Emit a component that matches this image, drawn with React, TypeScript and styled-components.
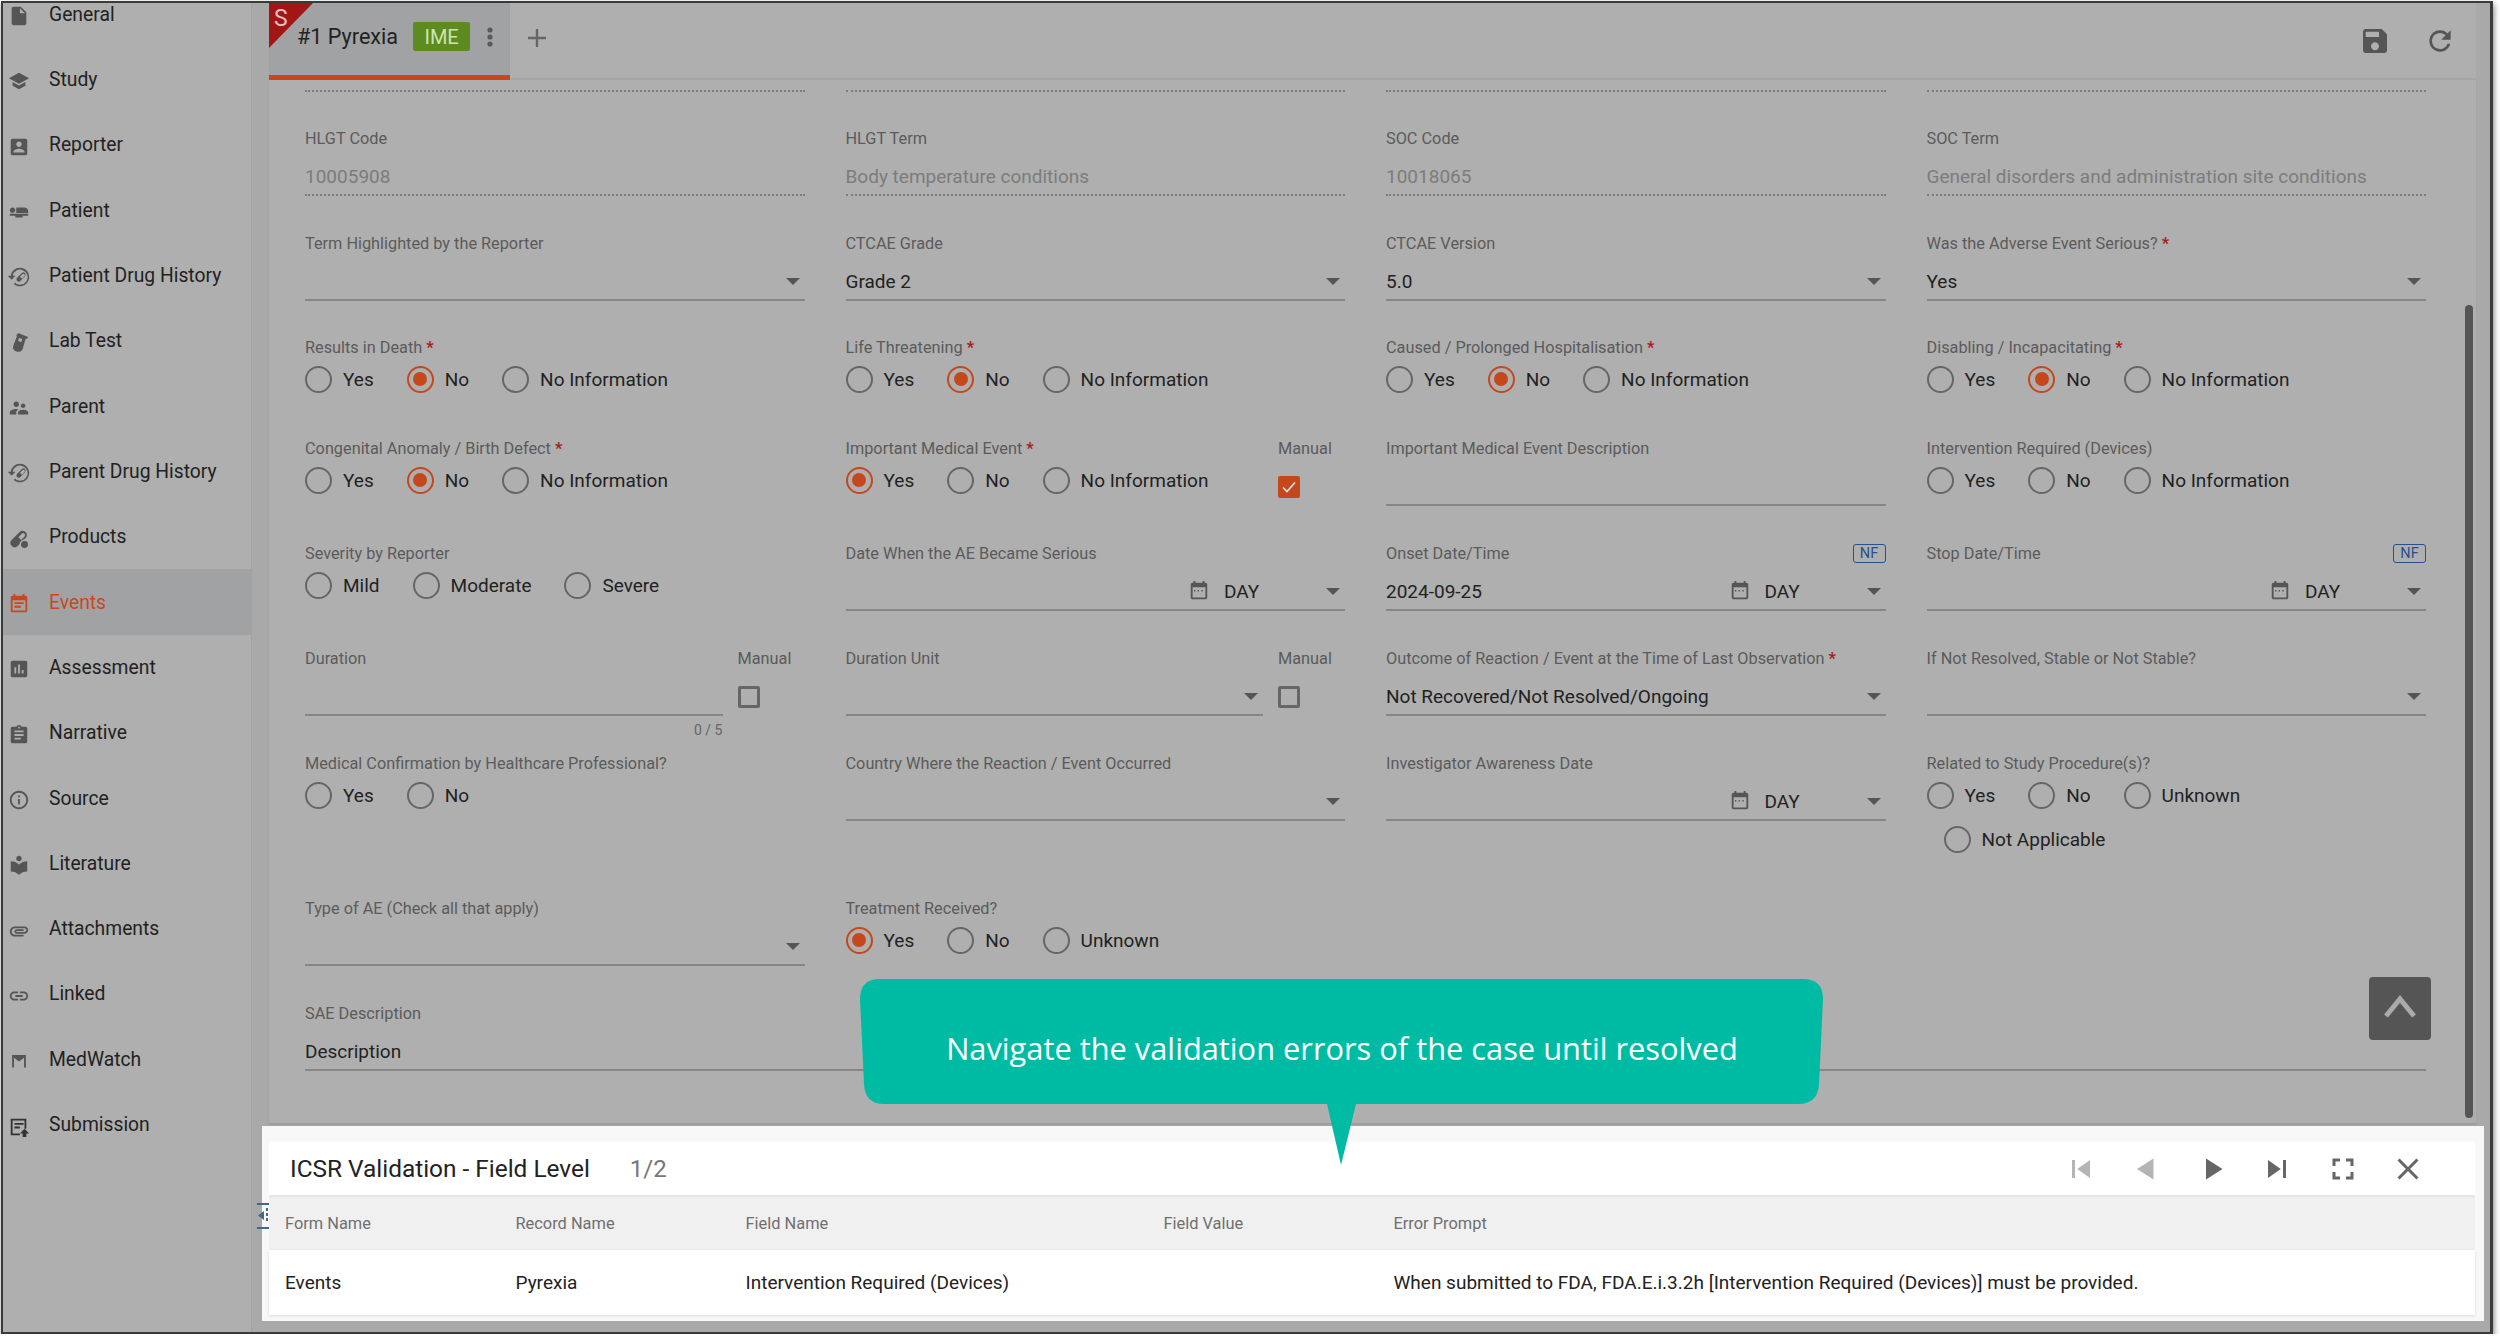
import { ReactNode } from 'react'
import styled, { createGlobalStyle } from 'styled-components'

const Global = createGlobalStyle`
  html, body {
    margin: 0;
    background: #fff;
    font-family: Roboto, "Liberation Sans", sans-serif;
  }
  * { box-sizing: border-box; }
`

const Frame = styled.div`
  width: 2492px;
  height: 1333px;
  margin: 1px 0 0 1px;
  border: 2px solid #3a3a3a;
  border-right-width: 3px;
  box-shadow: 1px 3px 6px rgba(0, 0, 0, 0.5);
  display: flex;
  position: relative;
  overflow: hidden;
  background: #a9a9a9;
`

const Sidebar = styled.nav`
  width: 249px;
  flex: none;
  background: #afafaf;
  border-right: 1px solid #a2a2a2;
  overflow: hidden;
`

const NavList = styled.div`
  margin-top: -21.6px;
`

const NavItem = styled.div<{ $active?: boolean }>`
  height: 65.33px;
  display: flex;
  align-items: center;
  padding-left: 5px;
  gap: 19px;
  font-size: 19.3px;
  color: ${p => (p.$active ? '#c8481e' : '#222')};
  background: ${p => (p.$active ? '#a0a2a4' : 'transparent')};
`

const NavIcon = styled.svg`
  width: 22px;
  height: 22px;
  flex: none;
  margin-top: 4px;
  fill: currentColor;
  fill-rule: evenodd;
`

const NavGlyph = styled.span<{ $tone: string }>`
  display: flex;
  color: ${p => p.$tone};
`

const Workspace = styled.div`
  flex: 1;
  min-width: 0;
  padding: 0 14px 0 17px;
  display: flex;
  flex-direction: column;
  position: relative;
`

const TabBar = styled.div`
  height: 77px;
  flex: none;
  background: #afafaf;
  border-bottom: 2px solid #a5a5a5;
  display: flex;
  align-items: stretch;
  position: relative;
`

const Tab = styled.div`
  width: 241px;
  margin-bottom: -2px;
  background: #a0a2a4;
  border-bottom: 5px solid #c4481c;
  position: relative;
  display: flex;
  align-items: center;
  padding: 0 0 5px 28px;
`

const Ribbon = styled.div`
  position: absolute;
  top: 0;
  left: 0;
  width: 44px;
  height: 45px;
  background: #a31616;
  clip-path: polygon(0 0, 100% 0, 0 100%);
  color: #e6c0c0;
  font-size: 23px;
  line-height: 24px;
  padding-left: 5px;
  padding-top: 4px;
`

const TabTitle = styled.span`
  font-size: 21.6px;
  color: #222;
`

const ImeBadge = styled.span`
  width: 57px;
  height: 29px;
  margin-left: 15px;
  border-radius: 2px;
  background: #5d8b1f;
  color: #cfe3b4;
  font-size: 20px;
  display: flex;
  align-items: center;
  justify-content: center;
`

const TabDots = styled.svg`
  width: 8px;
  height: 20px;
  margin-left: 16px;
  fill: #5a5a5a;
`

const AddTab = styled.svg`
  width: 20px;
  height: 20px;
  margin: 0 0 5px 17px;
  align-self: center;
  stroke: #666;
  stroke-width: 2.4;
`

const TabTools = styled.div`
  margin-left: auto;
  padding-right: 20px;
  display: flex;
  align-items: center;
  gap: 33px;
  color: #555;
`

const ToolIcon = styled.svg`
  width: 32px;
  height: 32px;
  fill: currentColor;
`

const FormArea = styled.div`
  height: 1043px;
  flex: none;
  background: #afafaf;
  box-shadow: 0 2px 2px rgba(0, 0, 0, 0.08);
  position: relative;
  overflow: hidden;
`

const FormGrid = styled.div`
  display: grid;
  grid-template-columns: repeat(4, 1fr);
  grid-template-rows: 48px 105px 104px 101px 105px 105px 105px 145px 105px;
  column-gap: 41px;
  padding: 0 50px 0 36px;
`

const DottedStub = styled.div`
  height: 12px;
  border-bottom: 2px dotted #7d7d7d;
`

const Field = styled.div`
  min-width: 0;
  display: flex;
  flex-direction: column;
`

const GrowField = styled(Field)`
  flex: 1;
`

const SplitField = styled.div`
  min-width: 0;
  display: flex;
  gap: 15px;
`

const WideField = styled(Field)`
  grid-column: 1 / -1;
`

const LabelRow = styled.div`
  height: 20px;
  display: flex;
  justify-content: space-between;
  align-items: center;
  font-size: 16.3px;
  color: #5b5b5b;
  white-space: nowrap;
`

const Star = styled.b`
  color: #a81c1c;
  margin-left: 4px;
`

const NfBadge = styled.span`
  width: 33px;
  height: 19px;
  border: 1.5px solid #29508c;
  border-radius: 3px;
  color: #29508c;
  font-size: 14.5px;
  display: flex;
  align-items: center;
  justify-content: center;
`

const Control = styled.div<{ $readonly?: boolean }>`
  height: 38px;
  margin-top: 10px;
  display: flex;
  align-items: center;
  font-size: 19px;
  color: ${p => (p.$readonly ? '#7c7c7c' : '#222')};
  border-bottom: ${p => (p.$readonly ? '2px dotted #7d7d7d' : '2px solid #868686')};
  white-space: nowrap;
`

const ControlValue = styled.span`
  flex: 1;
`

const Caret = styled.i`
  width: 0;
  height: 0;
  margin-right: 5px;
  border-left: 7px solid transparent;
  border-right: 7px solid transparent;
  border-top: 7px solid #555;
`

const CalendarIcon = styled.svg`
  width: 22px;
  height: 22px;
  margin-right: 14px;
  fill: #555;
`

const DayBox = styled.span`
  width: 102px;
`

const Counter = styled.div`
  margin-top: 6px;
  text-align: right;
  font-size: 14px;
  color: #666;
`

const RadioRow = styled.div<{ $indent?: boolean }>`
  height: 34px;
  margin-top: ${p => (p.$indent ? '10px' : '5px')};
  margin-left: ${p => (p.$indent ? '17px' : '0')};
  display: flex;
  align-items: center;
  gap: 33px;
`

const RadioItem = styled.label`
  display: flex;
  align-items: center;
  gap: 11px;
  font-size: 19px;
  color: #222;
  white-space: nowrap;
`

const RadioDot = styled.span<{ $on?: boolean }>`
  width: 27px;
  height: 27px;
  border-radius: 50%;
  border: 2.5px solid ${p => (p.$on ? '#c4481c' : '#666')};
  display: flex;
  align-items: center;
  justify-content: center;
  &::after {
    content: '';
    width: 14px;
    height: 14px;
    border-radius: 50%;
    background: ${p => (p.$on ? '#c4481c' : 'transparent')};
  }
`

const ManualColumn = styled.div`
  width: 67px;
  flex: none;
`

const Check = styled.span<{ $on?: boolean }>`
  display: flex;
  align-items: center;
  justify-content: center;
  width: 22px;
  height: 22px;
  margin-top: 18px;
  border-radius: 2px;
  background: ${p => (p.$on ? '#c4481c' : 'transparent')};
  border: ${p => (p.$on ? 'none' : '3px solid #666')};
`

const CheckMark = styled.svg`
  width: 16px;
  height: 16px;
  fill: none;
  stroke: #e4e4e4;
  stroke-width: 1.6;
`

const ScrollThumb = styled.div`
  position: absolute;
  top: 225px;
  right: 3px;
  width: 8px;
  height: 813px;
  border-radius: 4px;
  background: #555;
`

const TopButton = styled.div`
  position: absolute;
  left: 2100px;
  top: 897px;
  width: 62px;
  height: 63px;
  border-radius: 4px;
  background: #555;
  display: flex;
  align-items: center;
  justify-content: center;
`

const TopChevron = styled.svg`
  width: 36px;
  height: 30px;
  margin-bottom: 6px;
  fill: none;
  stroke: #aaa;
  stroke-width: 5;
`

const Panel = styled.section`
  margin: 3px -8px 0 -7px;
  padding: 16px 9px 6px 7px;
  background: #f8f8f8;
  flex: none;
`

const PanelHead = styled.header`
  height: 55px;
  padding: 0 21px;
  background: #fff;
  border-bottom: 2px solid #e6e6e6;
  display: flex;
  align-items: center;
`

const PanelTitle = styled.h2`
  margin: 0;
  font-weight: 400;
  font-size: 24.4px;
  color: #222;
`

const PanelCount = styled.span`
  margin-left: 40px;
  font-size: 24px;
  color: #777;
`

const PanelTools = styled.div`
  margin-left: auto;
  margin-right: 13px;
  display: flex;
  align-items: center;
`

const ToolSlot = styled.span`
  width: 65.5px;
  display: flex;
  justify-content: center;
`

const PanelIcon = styled.svg<{ $dim?: boolean }>`
  width: 36px;
  height: 36px;
  fill: ${p => (p.$dim ? '#b4b4b4' : '#666')};
`

const TableRow = styled.div<{ $head?: boolean }>`
  display: grid;
  grid-template-columns: 230.5px 230px 418px 230px 1fr;
  align-items: center;
  padding-left: 16px;
  height: ${p => (p.$head ? '53px' : '65px')};
  background: ${p => (p.$head ? '#f0f0f0' : '#fff')};
  font-size: ${p => (p.$head ? '16.4px' : '19px')};
  color: ${p => (p.$head ? '#6f6f6f' : '#222')};
  box-shadow: ${p => (p.$head ? 'none' : '0 1px 3px rgba(0, 0, 0, 0.12)')};
`

const Expander = styled.svg`
  position: absolute;
  left: 254px;
  top: 1200px;
  width: 13px;
  height: 26px;
  fill: #3f6a88;
`

const Callout = styled.div`
  position: absolute;
  left: 857px;
  top: 976px;
  width: 964px;
  height: 186px;
  background: #00bba3;
  clip-path: path('M0 20 Q0 0 20 0 H943 Q963 0 963 20 L959 105 Q958 125 938 125 H496 L481 186 L467 125 H24 Q5 125 4 105 Z');
`

const CalloutText = styled.div`
  height: 125px;
  padding-top: 12px;
  display: flex;
  align-items: center;
  justify-content: center;
  font-family: "Open Sans", sans-serif;
  font-size: 30.8px;
  color: #fff;
  white-space: nowrap;
`

const drugHistory = (
  <>
    <path d="M13 1.8a10.2 10.2 0 0 0-10 8.9H-.2l4.2 4.2 4.2-4.2H5.1a8.2 8.2 0 1 1 2.5 7.5l-1.4 1.5A10.2 10.2 0 1 0 13 1.8z" />
    <path d="M15.2 7.5a2.5 2.5 0 0 1 3.5 3.5l-5.5 5.5a2.5 2.5 0 0 1-3.5-3.5zM16 8.6l-3 3 2.3 2.3 2.4-2.6a1.5 1.5 0 0 0-.1-2.7 1.5 1.5 0 0 0-1.6 0z" />
  </>
)

const navItems: { label: string; active?: boolean; tone?: string; icon: ReactNode }[] = [
  { label: 'General', icon: <path d="M6 2c-1.1 0-2 .9-2 2v16c0 1.1.9 2 2 2h12c1.1 0 2-.9 2-2V8l-6-6H6zm7 7V3.5L18.5 9H13z" /> },
  { label: 'Study', icon: <path d="M5 13.18v4L12 21l7-3.82v-4L12 17l-7-3.82zM12 3L1 9l11 6 9-4.91L23 9 12 3z" /> },
  { label: 'Reporter', icon: <path d="M3 5v14c0 1.1.9 2 2 2h14c1.1 0 2-.9 2-2V5c0-1.1-.9-2-2-2H5c-1.1 0-2 .9-2 2zm12 4c0 1.66-1.34 3-3 3s-3-1.34-3-3 1.34-3 3-3 3 1.34 3 3zm-9 8c0-2 4-3.1 6-3.1s6 1.1 6 3.1v1H6v-1z" /> },
  { label: 'Patient', icon: <path d="M22 11v2H9V7h9c2.21 0 4 1.79 4 4zM2 14v2h6v2h8v-2h6v-2H2zm5.14-1.9c1.16-1.19 1.14-3.08-.04-4.24-1.19-1.16-3.08-1.14-4.24.04-1.16 1.19-1.14 3.08.04 4.24 1.19 1.16 3.08 1.14 4.24-.04z" /> },
  { label: 'Patient Drug History', icon: drugHistory },
  { label: 'Lab Test', icon: <path d="M11 1l11 4.5-1.5 2.2-1.2-.5-3.2 11c-.8 2.7-3.8 4-6.6 3.2s-4.6-3.6-3.8-6.2L9.8 4.4l-.9-.4zM12 6.5l-1 3.2 3.6 1.2 1-3.2z" /> },
  { label: 'Parent', icon: <path d="M16.5 12c1.38 0 2.49-1.12 2.49-2.5S17.88 7 16.5 7C15.12 7 14 8.12 14 9.5s1.12 2.5 2.5 2.5zM9 11c1.66 0 2.99-1.34 2.99-3S10.66 5 9 5C7.34 5 6 6.34 6 8s1.34 3 3 3zm7.5 3c-1.83 0-5.5.92-5.5 2.75V19h11v-2.25c0-1.83-3.67-2.75-5.5-2.75zM9 13c-2.33 0-7 1.17-7 3.5V19h7v-2.25c0-.85.33-2.34 2.37-3.47C10.5 13.1 9.66 13 9 13z" /> },
  { label: 'Parent Drug History', icon: drugHistory },
  {
    label: 'Products',
    icon: (
      <>
        <path d="M16 3a4.6 4.6 0 0 1 3.3 7.8L10.3 20a4.7 4.7 0 0 1-6.6-6.6L12.7 4.3A4.6 4.6 0 0 1 16 3zM15 6.3L11.4 10l3 3 3.6-3.7a2.1 2.1 0 0 0-3-3z" />
        <circle cx="18" cy="18" r="5.4" fill="#afafaf" />
        <circle cx="18" cy="18" r="3.8" />
      </>
    ),
  },
  { label: 'Events', active: true, icon: <path d="M17 10H7v2h10v-2zm2-7h-1V1h-2v2H8V1H6v2H5c-1.11 0-1.99.9-1.99 2L3 19c0 1.1.89 2 2 2h14c1.1 0 2-.9 2-2V5c0-1.1-.9-2-2-2zm0 16H5V8h14v11zm-5-5H7v2h7v-2z" /> },
  { label: 'Assessment', icon: <path d="M19 3H5c-1.1 0-2 .9-2 2v14c0 1.1.9 2 2 2h14c1.1 0 2-.9 2-2V5c0-1.1-.9-2-2-2zM9 17H7v-7h2v7zm4 0h-2V7h2v10zm4 0h-2v-4h2v4z" /> },
  { label: 'Narrative', icon: <path d="M19 3h-4.18C14.4 1.84 13.3 1 12 1c-1.3 0-2.4.84-2.82 2H5c-1.1 0-2 .9-2 2v14c0 1.1.9 2 2 2h14c1.1 0 2-.9 2-2V5c0-1.1-.9-2-2-2zm-7 0c.55 0 1 .45 1 1s-.45 1-1 1-1-.45-1-1 .45-1 1-1zm2 14H7v-2h7v2zm3-4H7v-2h10v2zm0-4H7V7h10v2z" /> },
  { label: 'Source', icon: <path d="M11 7h2v2h-2zm0 4h2v6h-2zm1-9C6.48 2 2 6.48 2 12s4.48 10 10 10 10-4.48 10-10S17.52 2 12 2zm0 18c-4.41 0-8-3.59-8-8s3.59-8 8-8 8 3.59 8 8-3.59 8-8 8z" /> },
  { label: 'Literature', icon: <path d="M12 11.55C9.64 9.35 6.48 8 3 8v11c3.48 0 6.64 1.35 9 3.55 2.36-2.19 5.52-3.55 9-3.55V8c-3.48 0-6.64 1.35-9 3.55zM12 8c1.66 0 3-1.34 3-3s-1.34-3-3-3-3 1.34-3 3 1.34 3 3 3z" /> },
  { label: 'Attachments', icon: <path d="M2 12.5C2 9.46 4.46 7 7.5 7H18c2.21 0 4 1.79 4 4s-1.79 4-4 4H9.5C8.12 15 7 13.88 7 12.5S8.12 10 9.5 10H17v2H9.41c-.55 0-.55 1 0 1H18c1.1 0 2-.9 2-2s-.9-2-2-2H7.5C5.57 9 4 10.57 4 12.5S5.57 16 7.5 16H17v2H7.5C4.46 18 2 15.54 2 12.5z" /> },
  { label: 'Linked', icon: <path d="M3.9 12c0-1.71 1.39-3.1 3.1-3.1h4V7H7c-2.76 0-5 2.24-5 5s2.24 5 5 5h4v-1.9H7c-1.71 0-3.1-1.39-3.1-3.1zM8 13h8v-2H8v2zm9-6h-4v1.9h4c1.71 0 3.1 1.39 3.1 3.1s-1.39 3.1-3.1 3.1h-4V17h4c2.76 0 5-2.24 5-5s-2.24-5-5-5z" /> },
  { label: 'MedWatch', icon: <path d="M4.5 5.5h15V19h-2V8.5L12 12.5l-5.5-4V19h-2z" /> },
  { label: 'Submission', tone: '#333', icon: <path d="M3 3h17v11h-2V5H5v14h8v2H3zM7 7.5h10v2H7zM7 11.5h6v2H7zM18 14l5 5h-3v4h-4v-4h-3z" /> },
]

const Label = ({ text, required, nf }: { text: string; required?: boolean; nf?: boolean }) => (
  <LabelRow>
    <span>
      {text}
      {required && <Star>*</Star>}
    </span>
    {nf && <NfBadge>NF</NfBadge>}
  </LabelRow>
)

const ReadonlyField = ({ label, value }: { label: string; value: string }) => (
  <Field>
    <Label text={label} />
    <Control $readonly>{value}</Control>
  </Field>
)

const SelectField = ({ label, value, required }: { label: string; value?: string; required?: boolean }) => (
  <Field>
    <Label text={label} required={required} />
    <Control>
      <ControlValue>{value}</ControlValue>
      <Caret />
    </Control>
  </Field>
)

const TextField = ({ label }: { label: string }) => (
  <Field>
    <Label text={label} />
    <Control />
  </Field>
)

const DateField = ({ label, value, nf }: { label: string; value?: string; nf?: boolean }) => (
  <Field>
    <Label text={label} nf={nf} />
    <Control>
      <ControlValue>{value}</ControlValue>
      <CalendarIcon viewBox="0 0 24 24">
        <path d="M19 3h-1V1h-2v2H8V1H6v2H5c-1.1 0-2 .9-2 2v14c0 1.1.9 2 2 2h14c1.1 0 2-.9 2-2V5c0-1.1-.9-2-2-2zm0 16H5V8h14v11zM8 11H6.5v1.5H8zm4 0h-1.5v1.5H12zm4 0h-1.5v1.5H16z" />
      </CalendarIcon>
      <DayBox>DAY</DayBox>
      <Caret />
    </Control>
  </Field>
)

const Radios = ({ options, selected }: { options: string[]; selected?: string }) => (
  <RadioRow>
    {options.map(o => (
      <RadioItem key={o}>
        <RadioDot $on={o === selected} />
        {o}
      </RadioItem>
    ))}
  </RadioRow>
)

const RadioField = ({
  label,
  options = ['Yes', 'No', 'No Information'],
  selected,
  required,
}: {
  label: string
  options?: string[]
  selected?: string
  required?: boolean
}) => (
  <Field>
    <Label text={label} required={required} />
    <Radios options={options} selected={selected} />
  </Field>
)

const Manual = ({ on }: { on?: boolean }) => (
  <ManualColumn>
    <Label text="Manual" />
    <Check $on={on}>
      {on && (
        <CheckMark viewBox="0 0 16 16">
          <path d="M2 8.5l4 4 8-9" />
        </CheckMark>
      )}
    </Check>
  </ManualColumn>
)

const App = () => (
  <>
    <Global />
    <Frame>
      <Sidebar>
        <NavList>
          {navItems.map(item => (
            <NavItem key={item.label} $active={item.active}>
              <NavGlyph $tone={item.active ? '#c8481e' : item.tone || '#555'}>
                <NavIcon viewBox="0 0 24 24">{item.icon}</NavIcon>
              </NavGlyph>
              {item.label}
            </NavItem>
          ))}
        </NavList>
      </Sidebar>
      <Workspace>
        <TabBar>
          <Tab>
            <Ribbon>S</Ribbon>
            <TabTitle>#1 Pyrexia</TabTitle>
            <ImeBadge>IME</ImeBadge>
            <TabDots viewBox="0 0 8 20">
              <circle cx="4" cy="3" r="2.6" />
              <circle cx="4" cy="10" r="2.6" />
              <circle cx="4" cy="17" r="2.6" />
            </TabDots>
          </Tab>
          <AddTab viewBox="0 0 20 20">
            <path d="M10 1v18M1 10h18" />
          </AddTab>
          <TabTools>
            <ToolIcon viewBox="0 0 24 24">
              <path d="M17 3H5c-1.11 0-2 .9-2 2v14c0 1.1.89 2 2 2h14c1.1 0 2-.9 2-2V7l-4-4zm-5 16c-1.66 0-3-1.34-3-3s1.34-3 3-3 3 1.34 3 3-1.34 3-3 3zm3-10H5V5h10v4z" />
            </ToolIcon>
            <ToolIcon viewBox="0 0 24 24">
              <path d="M17.65 6.35C16.2 4.9 14.21 4 12 4c-4.42 0-7.99 3.58-7.99 8s3.57 8 7.99 8c3.73 0 6.84-2.55 7.73-6h-2.08c-.82 2.33-3.04 4-5.65 4-3.31 0-6-2.69-6-6s2.69-6 6-6c1.66 0 3.14.69 4.22 1.78L13 11h7V4l-2.35 2.35z" />
            </ToolIcon>
          </TabTools>
        </TabBar>
        <FormArea>
          <FormGrid>
            <DottedStub />
            <DottedStub />
            <DottedStub />
            <DottedStub />

            <ReadonlyField label="HLGT Code" value="10005908" />
            <ReadonlyField label="HLGT Term" value="Body temperature conditions" />
            <ReadonlyField label="SOC Code" value="10018065" />
            <ReadonlyField label="SOC Term" value="General disorders and administration site conditions" />

            <SelectField label="Term Highlighted by the Reporter" />
            <SelectField label="CTCAE Grade" value="Grade 2" />
            <SelectField label="CTCAE Version" value="5.0" />
            <SelectField label="Was the Adverse Event Serious?" value="Yes" required />

            <RadioField label="Results in Death" selected="No" required />
            <RadioField label="Life Threatening" selected="No" required />
            <RadioField label="Caused / Prolonged Hospitalisation" selected="No" required />
            <RadioField label="Disabling / Incapacitating" selected="No" required />

            <RadioField label="Congenital Anomaly / Birth Defect" selected="No" required />
            <SplitField>
              <GrowField>
                <Label text="Important Medical Event" required />
                <Radios options={['Yes', 'No', 'No Information']} selected="Yes" />
              </GrowField>
              <Manual on />
            </SplitField>
            <TextField label="Important Medical Event Description" />
            <RadioField label="Intervention Required (Devices)" />

            <RadioField label="Severity by Reporter" options={['Mild', 'Moderate', 'Severe']} />
            <DateField label="Date When the AE Became Serious" />
            <DateField label="Onset Date/Time" value="2024-09-25" nf />
            <DateField label="Stop Date/Time" nf />

            <SplitField>
              <GrowField>
                <Label text="Duration" />
                <Control />
                <Counter>0 / 5</Counter>
              </GrowField>
              <Manual />
            </SplitField>
            <SplitField>
              <GrowField>
                <Label text="Duration Unit" />
                <Control>
                  <ControlValue />
                  <Caret />
                </Control>
              </GrowField>
              <Manual />
            </SplitField>
            <SelectField
              label="Outcome of Reaction / Event at the Time of Last Observation"
              value="Not Recovered/Not Resolved/Ongoing"
              required
            />
            <SelectField label="If Not Resolved, Stable or Not Stable?" />

            <RadioField label="Medical Confirmation by Healthcare Professional?" options={['Yes', 'No']} />
            <SelectField label="Country Where the Reaction / Event Occurred" />
            <DateField label="Investigator Awareness Date" />
            <Field>
              <Label text="Related to Study Procedure(s)?" />
              <Radios options={['Yes', 'No', 'Unknown']} />
              <RadioRow $indent>
                <RadioItem>
                  <RadioDot />
                  Not Applicable
                </RadioItem>
              </RadioRow>
            </Field>

            <SelectField label="Type of AE (Check all that apply)" />
            <RadioField label="Treatment Received?" options={['Yes', 'No', 'Unknown']} selected="Yes" />
            <div />
            <div />

            <WideField>
              <Label text="SAE Description" />
              <Control>Description</Control>
            </WideField>
          </FormGrid>
          <ScrollThumb />
          <TopButton>
            <TopChevron viewBox="0 0 36 30">
              <path d="M4 25L18 8l14 17" />
            </TopChevron>
          </TopButton>
        </FormArea>
        <Panel>
          <PanelHead>
            <PanelTitle>ICSR Validation - Field Level</PanelTitle>
            <PanelCount>1/2</PanelCount>
            <PanelTools>
              <ToolSlot>
                <PanelIcon viewBox="0 0 24 24" $dim>
                  <path d="M6 6h2v12H6zm3.5 6l8.5 6V6z" />
                </PanelIcon>
              </ToolSlot>
              <ToolSlot>
                <PanelIcon viewBox="0 0 24 24" $dim>
                  <path d="M17 5v14L6 12z" />
                </PanelIcon>
              </ToolSlot>
              <ToolSlot>
                <PanelIcon viewBox="0 0 24 24">
                  <path d="M8 5v14l11-7z" />
                </PanelIcon>
              </ToolSlot>
              <ToolSlot>
                <PanelIcon viewBox="0 0 24 24">
                  <path d="M6 18l8.5-6L6 6v12zM16 6v12h2V6h-2z" />
                </PanelIcon>
              </ToolSlot>
              <ToolSlot>
                <PanelIcon viewBox="0 0 24 24">
                  <path d="M7 14H5v5h5v-2H7v-3zm-2-4h2V7h3V5H5v5zm12 7h-3v2h5v-5h-2v3zM14 5v2h3v3h2V5h-5z" />
                </PanelIcon>
              </ToolSlot>
              <ToolSlot>
                <PanelIcon viewBox="0 0 24 24">
                  <path d="M19 6.41L17.59 5 12 10.59 6.41 5 5 6.41 10.59 12 5 17.59 6.41 19 12 13.41 17.59 19 19 17.59 13.41 12z" />
                </PanelIcon>
              </ToolSlot>
            </PanelTools>
          </PanelHead>
          <TableRow $head>
            <span>Form Name</span>
            <span>Record Name</span>
            <span>Field Name</span>
            <span>Field Value</span>
            <span>Error Prompt</span>
          </TableRow>
          <TableRow>
            <span>Events</span>
            <span>Pyrexia</span>
            <span>Intervention Required (Devices)</span>
            <span />
            <span>When submitted to FDA, FDA.E.i.3.2h [Intervention Required (Devices)] must be provided.</span>
          </TableRow>
        </Panel>
      </Workspace>
      <Expander viewBox="0 0 13 26">
        <path d="M0 0h12v2H0zM0 24h12v2H0zM9 5h2v3H9zM9 10h2v3H9zM9 15h2v3H9zM7 8v9L1 12.5z" />
      </Expander>
      <Callout>
        <CalloutText>Navigate the validation errors of the case until resolved</CalloutText>
      </Callout>
    </Frame>
  </>
)

export default App
